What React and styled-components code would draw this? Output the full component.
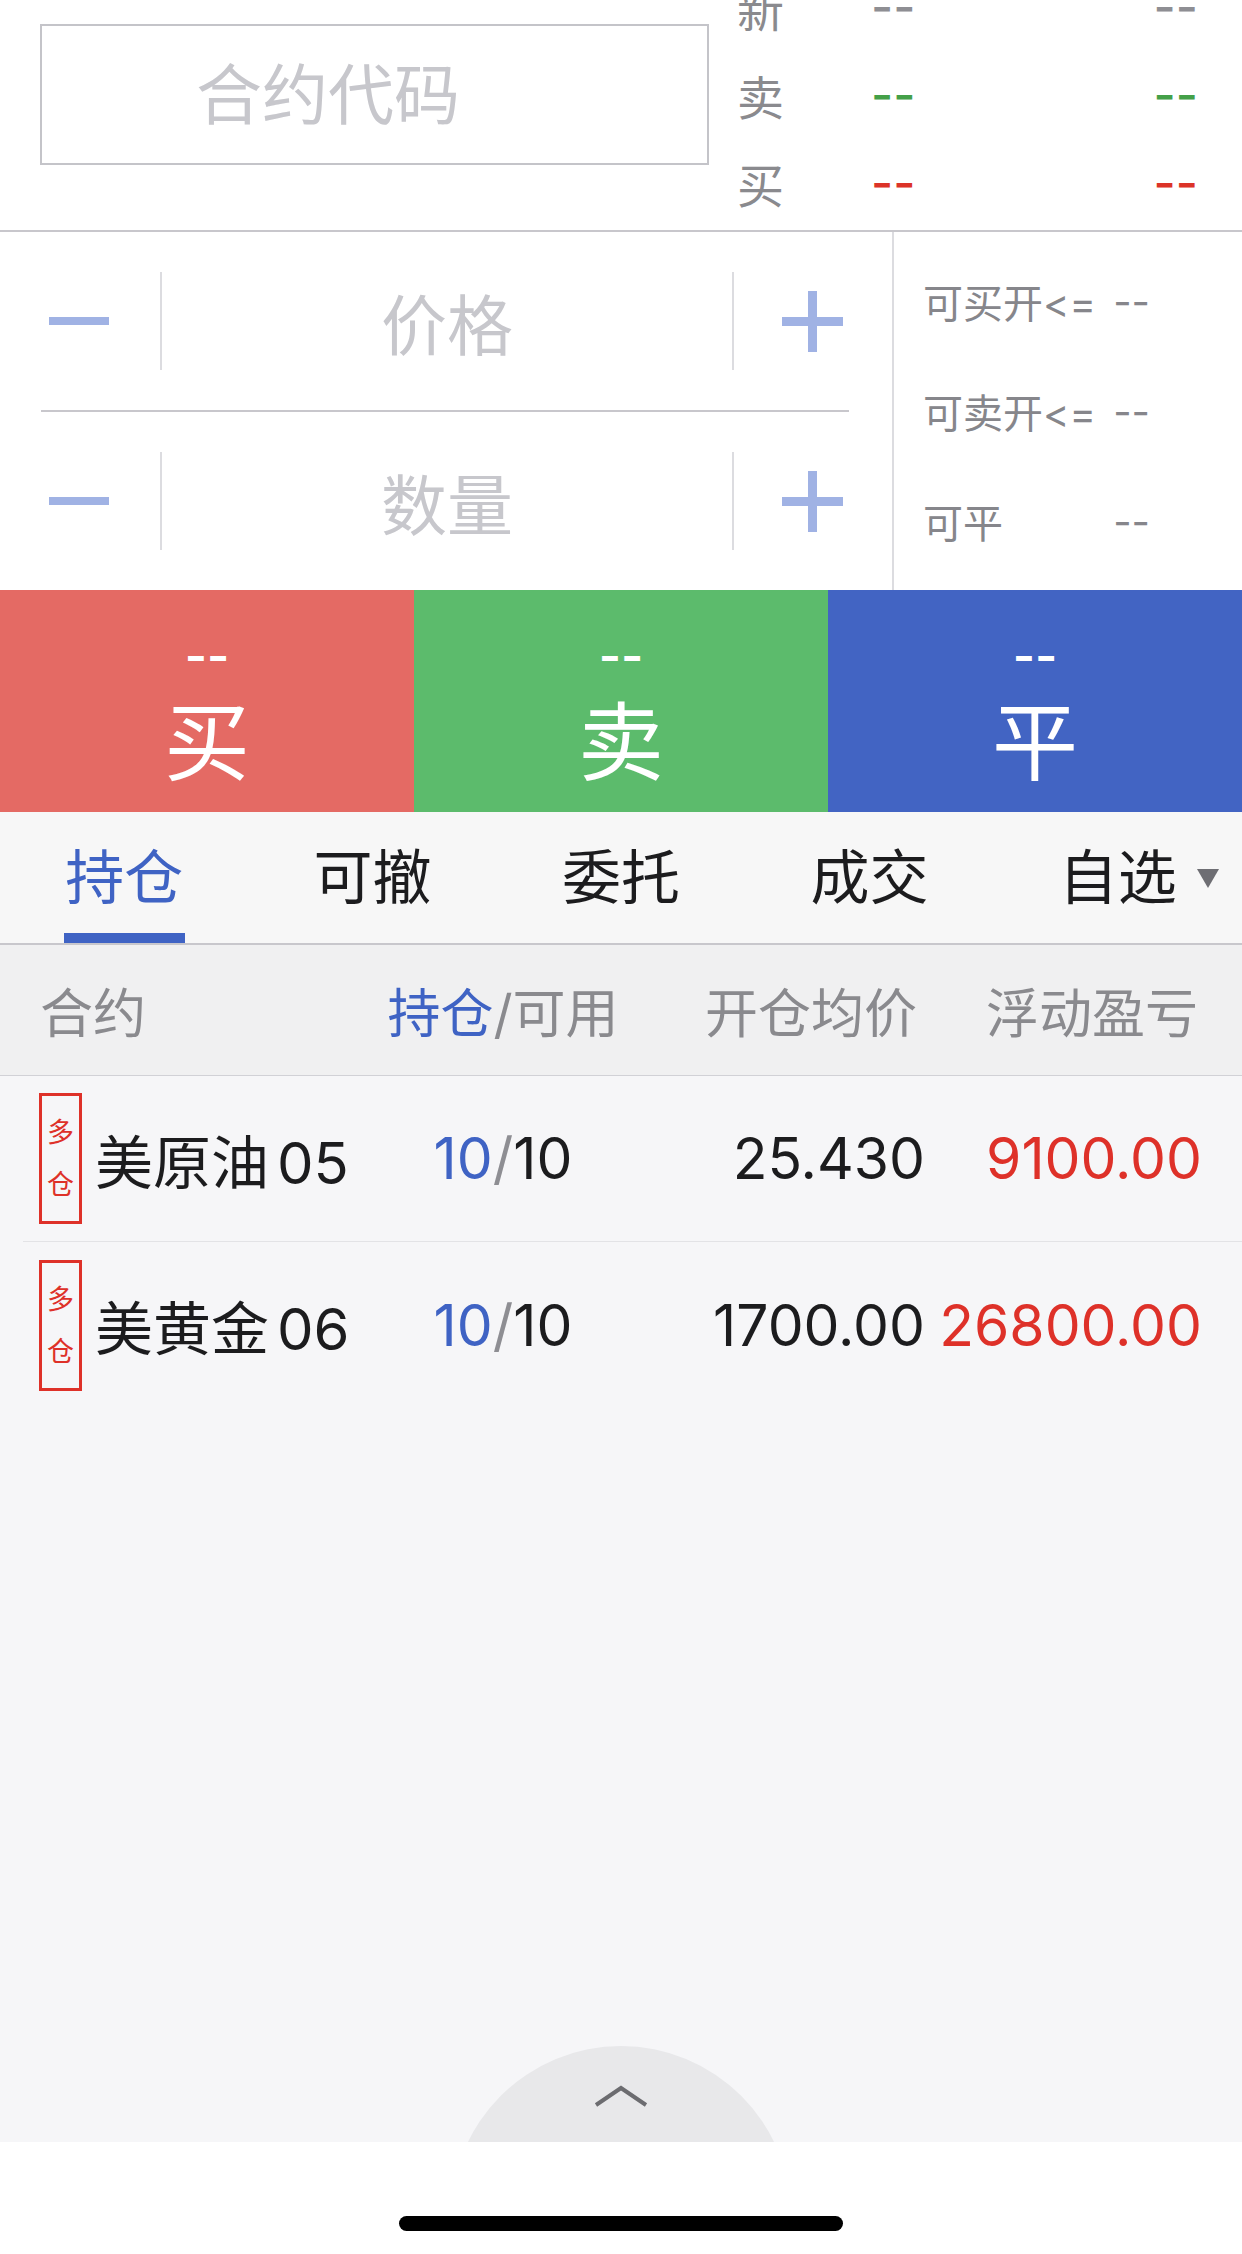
import React from "react";
import styled, { createGlobalStyle } from "styled-components";

const GlobalStyle = createGlobalStyle`
  * {
    box-sizing: border-box;
  }
  body {
    margin: 0;
    background: #ffffff;
    font-family: "Inter", "Noto Sans CJK SC", sans-serif;
  }
`;

const BLUE = "#3f63c4";
const RED = "#de3129";

const quotes = [
  { label: "新", color: "#8e8e93" },
  { label: "卖", color: "#44a048" },
  { label: "买", color: "#dc3328" },
];

const limits = [
  { label: "可买开<=", value: "--" },
  { label: "可卖开<=", value: "--" },
  { label: "可平", value: "--" },
];

const actions = [
  { label: "买", bg: "#e46a64" },
  { label: "卖", bg: "#5cbb6c" },
  { label: "平", bg: "#4264c3" },
];

const tabs = ["持仓", "可撤", "委托", "成交", "自选"];

const positions = [
  { name: "美原油", code: "05", hold: "10", usable: "10", avg: "25.430", pnl: "9100.00" },
  { name: "美黄金", code: "06", hold: "10", usable: "10", avg: "1700.00", pnl: "26800.00" },
];

const App = () => {
  return (
    <>
      <GlobalStyle />
      <Page>
        {/* 合约代码 + 盘口 */}
        <QuoteSection>
          <CodeInput placeholder="合约代码" />
          <QuoteTable>
            {quotes.map((q) => (
              <QuoteRow key={q.label}>
                <QuoteLabel>{q.label}</QuoteLabel>
                <QuoteValue $color={q.color}>--</QuoteValue>
                <QuoteValue $color={q.color}>--</QuoteValue>
              </QuoteRow>
            ))}
          </QuoteTable>
        </QuoteSection>

        {/* 价格 / 数量 */}
        <OrderSection>
          <StepperPanel>
            {["价格", "数量"].map((field) => (
              <StepRow key={field}>
                <MinusButton>
                  <MinusBar />
                </MinusButton>
                <VDivider />
                <FieldText>{field}</FieldText>
                <VDivider />
                <PlusButton>
                  <PlusIcon />
                </PlusButton>
              </StepRow>
            ))}
          </StepperPanel>
          <LimitsPanel>
            {limits.map((l) => (
              <LimitRow key={l.label}>
                <span>{l.label}</span>
                <span>{l.value}</span>
              </LimitRow>
            ))}
          </LimitsPanel>
        </OrderSection>

        {/* 买 卖 平 */}
        <ActionBar>
          {actions.map((a) => (
            <ActionButton key={a.label} $bg={a.bg}>
              <ActionPrice>--</ActionPrice>
              <ActionLabel>{a.label}</ActionLabel>
            </ActionButton>
          ))}
        </ActionBar>

        {/* 标签页 */}
        <TabBar>
          {tabs.map((t, i) => (
            <Tab key={t} $active={i === 0}>
              <TabText>
                {t}
                {t === "自选" && <DropTriangle />}
              </TabText>
            </Tab>
          ))}
        </TabBar>

        <HeaderRow>
          <HeadCell>合约</HeadCell>
          <HeadCell $align="center">
            <Blue>持仓</Blue>/可用
          </HeadCell>
          <HeadCell $align="right">开仓均价</HeadCell>
          <HeadCell $align="right">浮动盈亏</HeadCell>
        </HeaderRow>

        <PositionList>
          {positions.map((p, i) => (
            <PositionRow key={p.name} $last={i === positions.length - 1}>
              <NameCell>
                <SideTag>
                  <span>多</span>
                  <span>仓</span>
                </SideTag>
                <ContractName>
                  {p.name}
                  <ContractCode>{p.code}</ContractCode>
                </ContractName>
              </NameCell>
              <DataCell $align="center">
                <Blue>{p.hold}</Blue>
                <Slash>/</Slash>
                {p.usable}
              </DataCell>
              <DataCell $align="right">{p.avg}</DataCell>
              <DataCell $align="right" $color={RED}>
                {p.pnl}
              </DataCell>
            </PositionRow>
          ))}
          <PullHandle>
            <svg width="56" height="24" viewBox="0 0 56 24">
              <polyline
                points="3,21 28,4 53,21"
                fill="none"
                stroke="#6c6c70"
                strokeWidth="4"
              />
            </svg>
          </PullHandle>
        </PositionList>

        <HomeArea>
          <HomeIndicator />
        </HomeArea>
      </Page>
    </>
  );
};

const Page = styled.div`
  height: 100vh;
  display: flex;
  flex-direction: column;
  overflow: hidden;
  background: #ffffff;
`;

// 顶部：合约代码 + 盘口（页面已向上滚动一点）
const QuoteSection = styled.div`
  margin-top: -41px;
  height: 273px;
  flex-shrink: 0;
  display: flex;
  align-items: center;
  padding: 0 44px 0 40px;
  border-bottom: 2px solid #c8c7cc;
`;

const CodeInput = styled.input`
  width: 669px;
  height: 141px;
  border: 2px solid #c4c4c9;
  border-radius: 0;
  outline: none;
  background: #fff;
  font-family: inherit;
  font-size: 66px;
  text-align: left;
  color: #333;
  padding: 0 0 0 154px;
  &::placeholder {
    color: #c7c7cc;
  }
`;

const QuoteTable = styled.div`
  flex: 1;
  margin-left: 28px;
  display: flex;
  flex-direction: column;
`;

const QuoteRow = styled.div`
  height: 88px;
  display: grid;
  grid-template-columns: 134px 1fr auto;
  align-items: center;
`;

const QuoteLabel = styled.span`
  font-size: 47px;
  color: #8a8a8e;
`;

const QuoteValue = styled.span`
  font-size: 48px;
  font-weight: 500;
  color: ${(p) => p.$color};
`;

// 价格 / 数量 输入
const OrderSection = styled.div`
  height: 358px;
  flex-shrink: 0;
  display: flex;
  background: #fff;
`;

const StepperPanel = styled.div`
  width: 894px;
  padding: 0 43px 0 41px;
  display: flex;
  flex-direction: column;
  border-right: 2px solid #dcdce0;
`;

const StepRow = styled.div`
  flex: 1;
  display: flex;
  align-items: center;
  &:first-child {
    border-bottom: 2px solid #c8c7cc;
  }
`;

const MinusButton = styled.div`
  width: 119px;
  padding-left: 8px;
  display: flex;
  align-items: center;
`;

const MinusBar = styled.span`
  width: 60px;
  height: 8px;
  background: #a0b2e4;
`;

const PlusButton = styled.div`
  width: 115px;
  padding-left: 48px;
  display: flex;
  align-items: center;
`;

const PlusIcon = styled.span`
  position: relative;
  width: 61px;
  height: 61px;
  &::before,
  &::after {
    content: "";
    position: absolute;
    background: #a0b2e4;
  }
  &::before {
    left: 0;
    right: 0;
    top: 26px;
    height: 9px;
  }
  &::after {
    top: 0;
    bottom: 0;
    left: 26px;
    width: 9px;
  }
`;

const VDivider = styled.span`
  width: 2px;
  height: 98px;
  background: #dcdce0;
`;

const FieldText = styled.div`
  flex: 1;
  text-align: center;
  font-size: 66px;
  color: #c7c7cc;
`;

const LimitsPanel = styled.div`
  flex: 1;
  padding-left: 29px;
  display: flex;
  flex-direction: column;
  justify-content: center;
`;

const LimitRow = styled.div`
  height: 110px;
  width: 227px;
  display: flex;
  align-items: center;
  justify-content: space-between;
  font-size: 40px;
  color: #86868b;
`;

// 买 卖 平 按钮
const ActionBar = styled.div`
  height: 222px;
  flex-shrink: 0;
  display: flex;
`;

const ActionButton = styled.div`
  flex: 1;
  display: flex;
  flex-direction: column;
  align-items: center;
  padding-top: 46px;
  background: ${(p) => p.$bg};
  color: #fff;
`;

const ActionPrice = styled.div`
  font-size: 48px;
  line-height: 40px;
  font-weight: 600;
`;

const ActionLabel = styled.div`
  margin-top: 24px;
  font-size: 86px;
  line-height: 86px;
`;

// 标签页
const TabBar = styled.div`
  height: 133px;
  flex-shrink: 0;
  display: grid;
  grid-template-columns: repeat(5, 1fr);
  background: #f7f7f7;
  border-bottom: 2px solid #c8c7cc;
`;

const Tab = styled.div`
  position: relative;
  display: flex;
  align-items: center;
  justify-content: center;
  color: ${(p) => (p.$active ? BLUE : "#1c1c1e")};
  &::after {
    content: "";
    display: ${(p) => (p.$active ? "block" : "none")};
    position: absolute;
    bottom: 0;
    left: 50%;
    width: 121px;
    margin-left: -60px;
    height: 10px;
    background: ${BLUE};
  }
`;

const TabText = styled.span`
  position: relative;
  font-size: 59px;
  line-height: 1;
`;

const DropTriangle = styled.span`
  position: absolute;
  left: calc(100% + 20px);
  top: 50%;
  margin-top: -9px;
  width: 0;
  height: 0;
  border-left: 11px solid transparent;
  border-right: 11px solid transparent;
  border-top: 19px solid #6e6e73;
`;

// 持仓表
const HeaderRow = styled.div`
  height: 131px;
  flex-shrink: 0;
  display: grid;
  grid-template-columns: 340px 246px 291px 281px;
  align-items: center;
  padding: 0 44px 0 40px;
  background: #f0f0f1;
  border-bottom: 1px solid #d1d1d6;
`;

const HeadCell = styled.div`
  font-size: 53px;
  color: #8a8a8e;
  text-align: ${(p) => p.$align || "left"};
`;

const Blue = styled.span`
  color: ${BLUE};
`;

const PositionList = styled.div`
  flex: 1;
  position: relative;
  overflow: hidden;
  background: #f6f6f8;
`;

const PositionRow = styled.div`
  height: 166px;
  margin-left: 23px;
  padding: 0 40px 0 16px;
  display: grid;
  grid-template-columns: 341px 246px 299px 277px;
  align-items: center;
  border-bottom: ${(p) => (p.$last ? "none" : "1px solid #e3e3e6")};
`;

const NameCell = styled.div`
  display: flex;
  align-items: center;
`;

const SideTag = styled.div`
  width: 43px;
  height: 131px;
  border: 3px solid ${RED};
  display: flex;
  flex-direction: column;
  align-items: center;
  justify-content: center;
  gap: 25px;
  font-size: 27px;
  line-height: 27px;
  color: ${RED};
`;

const ContractName = styled.span`
  margin-left: 13px;
  font-size: 58px;
  color: #1c1c1e;
`;

const ContractCode = styled.span`
  margin-left: 8px;
`;

const DataCell = styled.div`
  font-size: 57px;
  color: ${(p) => p.$color || "#1c1c1e"};
  text-align: ${(p) => p.$align || "left"};
  white-space: nowrap;
`;

const Slash = styled.span`
  color: #8e8e93;
`;

const PullHandle = styled.div`
  position: absolute;
  left: 50%;
  top: 970px;
  width: 340px;
  height: 340px;
  margin-left: -170px;
  border-radius: 50%;
  background: #e8e8ea;
  display: flex;
  justify-content: center;
  padding-top: 38px;
`;

const HomeArea = styled.div`
  height: 112px;
  flex-shrink: 0;
  display: flex;
  justify-content: center;
  padding-top: 74px;
  background: #fff;
`;

const HomeIndicator = styled.div`
  width: 444px;
  height: 15px;
  border-radius: 8px;
  background: #000;
`;

export default App;
